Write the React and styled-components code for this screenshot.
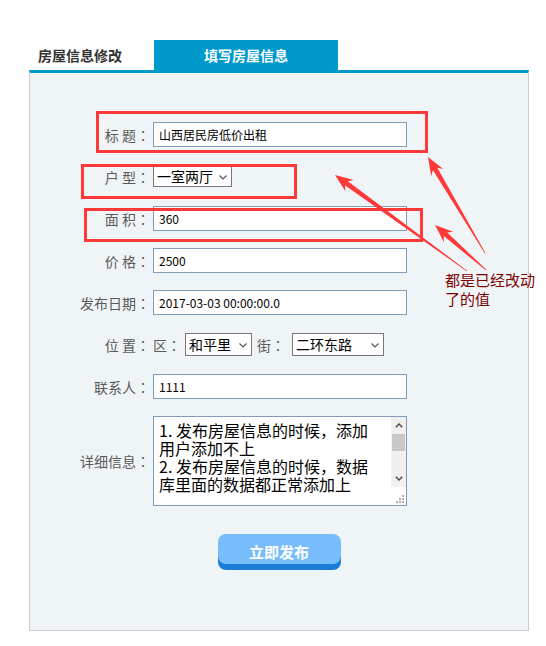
import React from "react";
import styled, { createGlobalStyle } from "styled-components";

const GlobalStyle = createGlobalStyle`
  html, body { margin: 0; padding: 0; background: #fff; }
  body { font-family: "Noto Sans CJK SC", "Noto Sans", sans-serif; }
  * { box-sizing: border-box; }
`;

const Page = styled.div`
  position: relative;
  width: 546px;
  min-height: 646px;
  padding: 40px 0 0 29px;
`;

const Frame = styled.div`
  width: 500px;
`;

const TabBar = styled.div`
  display: flex;
  height: 30px;
`;

const Tab = styled.div`
  width: ${(p) => (p.$active ? "184px" : "125px")};
  padding: ${(p) => (p.$active ? "0" : "0 9px")};
  text-align: ${(p) => (p.$active ? "center" : "left")};
  background: ${(p) => (p.$active ? "#0099cc" : "transparent")};
  color: ${(p) => (p.$active ? "#fff" : "#333")};
  font-size: 14px;
  font-weight: bold;
  line-height: 30px;
`;

const Panel = styled.div`
  background: #eff4f7;
  border: 1px solid #cccccc;
  border-top: 3px solid #0099cc;
  padding: 41px 0 60px 40px;
`;

const Row = styled.div`
  display: flex;
  align-items: center;
  gap: 3px;
  min-height: 25px;
  padding: 8px 0 9px;
  box-sizing: content-box;
`;

const Label = styled.label`
  width: 80px;
  text-align: right;
  color: #5a5a5a;
  font-size: 14px;
  line-height: 20px;
  white-space: pre;
`;

const Colon = styled.span`
  display: inline-block;
  width: 14px;
  text-align: center;
  font-family: "Noto Sans CJK TC", "Noto Sans CJK SC", sans-serif;
`;

const Inline = styled.span`
  color: #5a5a5a;
  font-size: 14px;
  line-height: 20px;
  margin: ${(p) => p.$m || "0"};
`;

const Input = styled.input`
  width: 254px;
  height: 25px;
  border: 1px solid #7f9db9;
  background: #fff;
  padding: 0 5px;
  font-family: "Noto Sans CJK SC", sans-serif;
  font-size: 12px;
  color: #000;
  outline: none;
`;

const SelectBox = styled.span`
  position: relative;
  display: inline-flex;
  margin: ${(p) => p.$m || "0"};
`;

const Select = styled.select`
  appearance: none;
  -webkit-appearance: none;
  width: ${(p) => p.$w}px;
  height: ${(p) => p.$h}px;
  border: 1px solid #767676;
  border-radius: 0;
  background: #fff;
  padding: 0 0 0 3px;
  font-family: "Noto Sans CJK SC", sans-serif;
  font-size: 14px;
  line-height: ${(p) => p.$h - 2}px;
  color: #000;
  outline: none;
`;

const Chevron = styled.svg`
  position: absolute;
  right: 5px;
  top: 50%;
  margin-top: -2px;
  pointer-events: none;
`;

const TextBox = styled.div`
  display: flex;
  width: 254px;
  height: 90px;
  border: 1px solid #7f9db9;
  background: #fff;
`;

const Area = styled.textarea`
  flex: 1;
  border: none;
  outline: none;
  resize: none;
  overflow: hidden;
  padding: 4px 5px;
  font-family: "Noto Sans CJK SC", sans-serif;
  font-size: 16px;
  line-height: 18px;
  color: #000;
  background: #fff;
`;

const ScrollCol = styled.div`
  width: 15px;
  display: flex;
  flex-direction: column;
`;

const Track = styled.div`
  flex: 1;
  display: flex;
  flex-direction: column;
  background: #f0f0f0;
`;

const ScrollBtn = styled.div`
  height: 17px;
  display: flex;
  align-items: center;
  justify-content: center;
`;

const Thumb = styled.div`
  height: 17px;
  margin: 0 1px;
  background: #c8c8c8;
`;

const TrackFill = styled.div`
  flex: 1;
`;

const Corner = styled.div`
  height: 18px;
  display: flex;
  align-items: flex-end;
  justify-content: flex-end;
  padding: 0 2px 2px 0;
  background: #fff;
`;

const ButtonRow = styled.div`
  display: flex;
  justify-content: center;
  margin: 19px 0 0 -40px;
`;

const Submit = styled.button`
  width: 123px;
  height: 30px;
  border: none;
  border-radius: 8px;
  background: #77bdfc;
  box-shadow: 0 6px 0 #1b7dd6;
  color: #fff;
  font-family: "Noto Sans CJK SC", sans-serif;
  font-size: 15px;
  font-weight: bold;
  line-height: 36px;
  padding: 0;
  margin-bottom: 6px;
`;

const Overlay = styled.svg`
  position: absolute;
  left: 0;
  top: 0;
  pointer-events: none;
`;

const Note = styled.div`
  position: absolute;
  left: 445px;
  top: 270px;
  color: #800000;
  font-size: 15px;
  line-height: 19px;
  white-space: pre;
`;

const ChevronDown = () => (
  <Chevron width="8" height="5" viewBox="0 0 8 5">
    <polyline points="0.5,0.5 4,4 7.5,0.5" fill="none" stroke="#555" strokeWidth="1.2" />
  </Chevron>
);

const Dropdown = ({ w, h, value, options, m }) => (
  <SelectBox $m={m}>
    <Select $w={w} $h={h} defaultValue={value}>
      {options.map((o) => (
        <option key={o}>{o}</option>
      ))}
    </Select>
    <ChevronDown />
  </SelectBox>
);

const FieldLabel = ({ children }) => (
  <Label>
    {children}
    <Colon>：</Colon>
  </Label>
);

function arrowPoints(tip, tail, headLen = 18, headW = 14, shaftW = 5, tailW = 0.8) {
  const dx = tip[0] - tail[0];
  const dy = tip[1] - tail[1];
  const len = Math.hypot(dx, dy);
  const ux = dx / len;
  const uy = dy / len;
  const nx = -uy;
  const ny = ux;
  const bx = tip[0] - ux * headLen;
  const by = tip[1] - uy * headLen;
  const bx2 = tip[0] - ux * (headLen - 4);
  const by2 = tip[1] - uy * (headLen - 4);
  const pts = [
    [tip[0], tip[1]],
    [bx + (nx * headW) / 2, by + (ny * headW) / 2],
    [bx2 + (nx * shaftW) / 2, by2 + (ny * shaftW) / 2],
    [tail[0] + (nx * tailW) / 2, tail[1] + (ny * tailW) / 2],
    [tail[0] - (nx * tailW) / 2, tail[1] - (ny * tailW) / 2],
    [bx2 - (nx * shaftW) / 2, by2 - (ny * shaftW) / 2],
    [bx - (nx * headW) / 2, by - (ny * headW) / 2],
  ];
  return pts.map((p) => p.map((v) => v.toFixed(1)).join(",")).join(" ");
}

const Annotations = () => (
  <Overlay width="546" height="646" viewBox="0 0 546 646">
    <g fill="none" stroke="#ff3838" strokeWidth="3">
      <rect x="97.5" y="112.5" width="329" height="39" />
      <rect x="82.5" y="165.5" width="213" height="32" />
      <rect x="85.5" y="209.5" width="336" height="31" />
    </g>
    <g fill="#ff3838">
      <polygon points={arrowPoints([428, 157], [485, 253])} />
      <polygon points={arrowPoints([335, 175], [467, 271])} />
      <polygon points={arrowPoints([435, 225], [486, 270])} />
    </g>
  </Overlay>
);

const details =
  "1. 发布房屋信息的时候，添加\n用户添加不上\n2. 发布房屋信息的时候，数据\n库里面的数据都正常添加上";

export default function App() {
  return (
    <Page>
      <GlobalStyle />
      <Frame>
        <TabBar>
          <Tab>房屋信息修改</Tab>
          <Tab $active>填写房屋信息</Tab>
        </TabBar>
        <Panel>
          <Row>
            <FieldLabel>标 题</FieldLabel>
            <Input defaultValue="山西居民房低价出租" />
          </Row>
          <Row>
            <FieldLabel>户 型</FieldLabel>
            <Dropdown w={79} h={21} value="一室两厅" options={["一室一厅", "一室两厅", "两室一厅", "两室两厅"]} />
          </Row>
          <Row>
            <FieldLabel>面 积</FieldLabel>
            <Input defaultValue="360" />
          </Row>
          <Row>
            <FieldLabel>价 格</FieldLabel>
            <Input defaultValue="2500" />
          </Row>
          <Row>
            <FieldLabel>发布日期</FieldLabel>
            <Input defaultValue="2017-03-03 00:00:00.0" />
          </Row>
          <Row>
            <FieldLabel>位 置</FieldLabel>
            <Inline $m="0 1px 0 0">
              区<Colon>：</Colon>
            </Inline>
            <Dropdown w={67} h={23} value="和平里" options={["和平里", "朝阳门", "东直门"]} />
            <Inline $m="0 2px">
              街<Colon>：</Colon>
            </Inline>
            <Dropdown w={92} h={23} value="二环东路" options={["二环东路", "三环东路"]} m="0 0 0 2px" />
          </Row>
          <Row>
            <FieldLabel>联系人</FieldLabel>
            <Input defaultValue="1111" />
          </Row>
          <Row>
            <FieldLabel>详细信息</FieldLabel>
            <TextBox>
              <Area defaultValue={details} />
              <ScrollCol>
                <Track>
                  <ScrollBtn>
                    <svg width="8" height="5" viewBox="0 0 8 5">
                      <polyline points="0.8,4.2 4,1 7.2,4.2" fill="none" stroke="#505050" strokeWidth="1.5" />
                    </svg>
                  </ScrollBtn>
                  <Thumb />
                  <TrackFill />
                  <ScrollBtn>
                    <svg width="8" height="5" viewBox="0 0 8 5">
                      <polyline points="0.8,0.8 4,4 7.2,0.8" fill="none" stroke="#505050" strokeWidth="1.5" />
                    </svg>
                  </ScrollBtn>
                </Track>
                <Corner>
                  <svg width="8" height="8" viewBox="0 0 8 8">
                    <g fill="#b0b0b0">
                      <rect x="6" y="0" width="2" height="2" />
                      <rect x="3" y="3" width="2" height="2" />
                      <rect x="6" y="3" width="2" height="2" />
                      <rect x="0" y="6" width="2" height="2" />
                      <rect x="3" y="6" width="2" height="2" />
                      <rect x="6" y="6" width="2" height="2" />
                    </g>
                  </svg>
                </Corner>
              </ScrollCol>
            </TextBox>
          </Row>
          <ButtonRow>
            <Submit type="button">立即发布</Submit>
          </ButtonRow>
        </Panel>
      </Frame>
      <Annotations />
      <Note>{"都是已经改动\n了的值"}</Note>
    </Page>
  );
}
